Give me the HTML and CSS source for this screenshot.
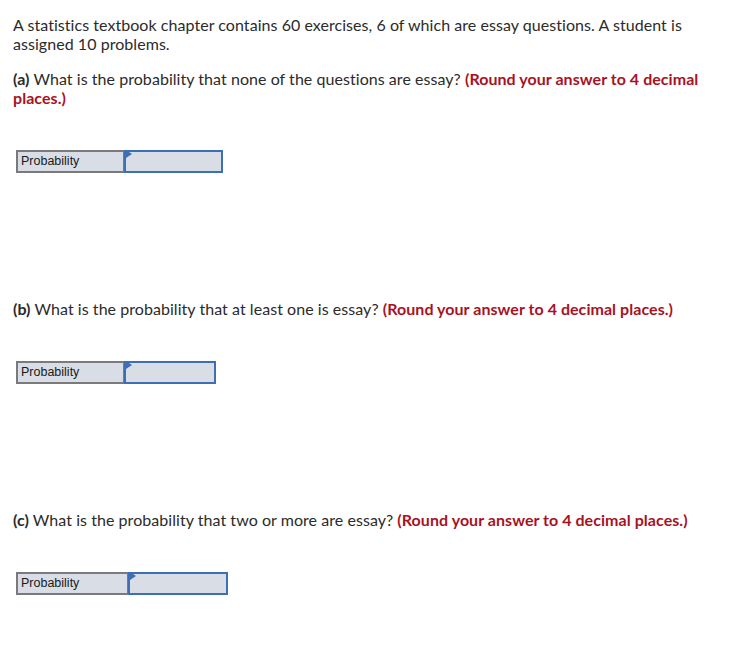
FILE: index.html
```html
<!DOCTYPE html>
<html>
<head>
<meta charset="utf-8">
<link rel="stylesheet" href="styles.css">
</head>
<body>
<div class="page">
  <p class="intro">A statistics textbook chapter contains 60 exercises, 6 of which are essay questions. A student is assigned 10 problems.</p>

  <p class="question q-a"><b class="part">(a)</b> What is the probability that none of the questions are essay? <b class="hint">(Round your answer to 4 decimal places.)</b></p>
  <div class="answer answer-a">
    <div class="label">Probability</div>
    <div class="input"><span class="flag"></span></div>
  </div>

  <p class="question q-b"><b class="part">(b)</b> What is the probability that at least one is essay? <b class="hint">(Round your answer to 4 decimal places.)</b></p>
  <div class="answer answer-b">
    <div class="label">Probability</div>
    <div class="input"><span class="flag"></span></div>
  </div>

  <p class="question q-c"><b class="part">(c)</b> What is the probability that two or more are essay? <b class="hint">(Round your answer to 4 decimal places.)</b></p>
  <div class="answer answer-c">
    <div class="label">Probability</div>
    <div class="input"><span class="flag"></span></div>
  </div>
</div>
</body>
</html>
```
FILE: styles.css
```css
html, body {
  margin: 0;
  padding: 0;
  background: #ffffff;
}

.page {
  padding: 15px 13px 0 13px;
  width: 700px;
  font-family: Lato, "Liberation Sans", sans-serif;
  font-size: 16px;
  letter-spacing: 0.05px;
  line-height: 19px;
  color: #2b2b2b;
}

p {
  margin: 0;
}

.intro {
  margin-bottom: 16px;
}

.part {
  font-weight: 700;
  color: #2b2b2b;
}

.hint {
  font-weight: 700;
  color: #a8121f;
}

.question {
  margin-bottom: 43px;
}

.q-b, .q-c {
  margin-top: 126px;
}

.answer {
  display: flex;
  margin-left: 3px;
  height: 23px;
  box-sizing: border-box;
  border: 2px solid #7a7a7a;
  background: #d9dde6;
  font-family: "Liberation Sans", Arial, sans-serif;
  font-size: 12.5px;
  letter-spacing: 0;
  line-height: 19px;
  color: #1a1a1a;
}

.label {
  width: 106px;
  padding-left: 3px;
  box-sizing: border-box;
  border-right: 1px solid #7a7a7a;
}

.answer-a { width: 207px; }
.answer-b { width: 200px; }
.answer-c { width: 212px; }
.answer-c .label { width: 110px; }

.input {
  flex: 1;
  position: relative;
  margin: -2px -2px -2px 0;
  border: 2px solid #3e6eb4;
  background: #d9dde6;
}

.flag {
  position: absolute;
  left: 0;
  top: 0;
  width: 0;
  height: 0;
  border-top: 4px solid transparent;
  border-bottom: 4px solid transparent;
  border-left: 6px solid #3e6eb4;
  transform: translateY(-2px);
}
```
